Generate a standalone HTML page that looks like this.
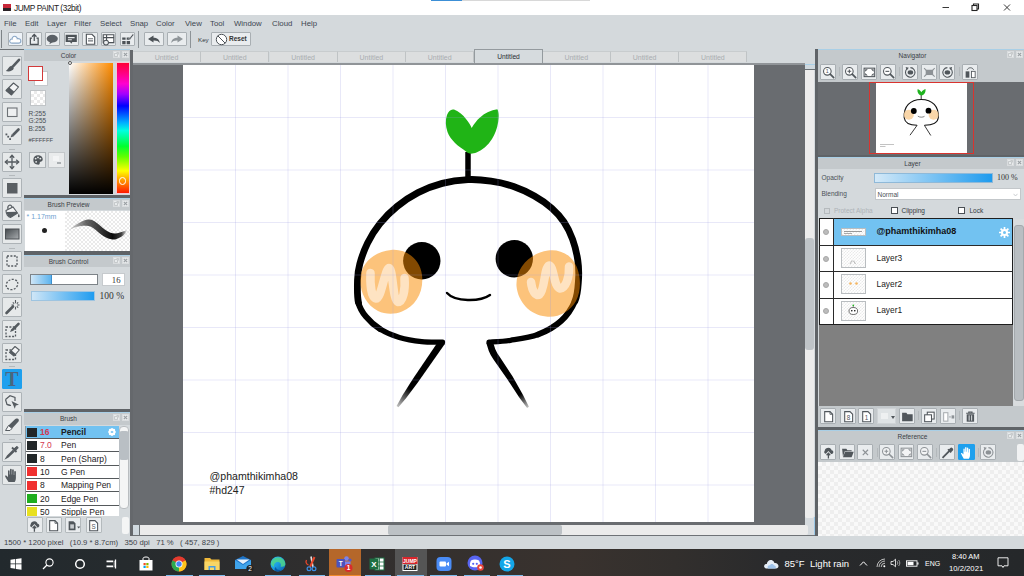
<!DOCTYPE html>
<html><head><meta charset="utf-8"><title>JUMP PAINT</title>
<style>
*{box-sizing:border-box;margin:0;padding:0}
html,body{width:1024px;height:576px;overflow:hidden}
body{position:relative;background:#d4d9dc;font-family:"Liberation Sans","DejaVu Sans",sans-serif;font-size:9px;color:#3a3f44}
.a{position:absolute}
.t{position:absolute;white-space:nowrap;line-height:1}
#title{left:0;top:0;width:1024px;height:15px;background:#fff}
#menubar{left:0;top:15px;width:1024px;height:14px;background:#d4d9dc}
#menubar .t{top:4.5px;font-size:7.8px;color:#3c4650}
#toolbar{left:0;top:29px;width:1024px;height:21px;background:#d4d9dc}
.tb{position:absolute;top:2.6px;height:14.8px;width:15.4px;background:#e9ecee;border:1px solid #a9afb3;border-radius:1px}
.tool{position:absolute;left:2px;width:20px;height:20px;background:#e6e9ea;border:1px solid #adb3b7;border-radius:1px}
.ptitle{position:absolute;background:#c4c9cc;border-top:1px solid #a9cfe6;text-align:center;font-size:6.5px;color:#3a4046;line-height:12px;padding-right:17px}
.pbtn{position:absolute;width:7px;height:7px;background:#e8ebec;border:1px solid #d9dcde}
#dark{left:133px;top:63px;width:672px;height:462px;background:#696c70}
#canvas{left:183px;top:65px;width:571px;height:457px;background:#fff;overflow:hidden}
.tab{position:absolute;top:51px;height:11px;width:68px;background:#dcdedf;border-right:1px solid #bfc3c5;border-top:1px solid #c8ccce;font-size:7px;color:#a9adb0;text-align:center;line-height:11px}
#status{left:0;top:536px;width:1024px;height:13px;background:#d4d9dc}
#taskbar{left:0;top:549px;width:1024px;height:27px;background:linear-gradient(90deg,#22292d 0%,#262b2e 12%,#2d2d2e 25%,#34302e 42%,#39322e 56%,#322f2d 66%,#292a2c 76%,#25282a 100%)}
.chk{background-color:#fff;background-image:linear-gradient(45deg,#eaeaea 25%,transparent 25%,transparent 75%,#eaeaea 75%),linear-gradient(45deg,#eaeaea 25%,transparent 25%,transparent 75%,#eaeaea 75%);background-size:8px 8px;background-position:0 0,4px 4px}
</style></head><body>

<!-- TITLE BAR -->
<div id="title" class="a">
  <div class="a" style="left:3px;top:4px;width:8px;height:4px;background:#c8283a"></div>
  <div class="a" style="left:3px;top:8px;width:8px;height:3px;background:#2a2226"></div>
  <div class="t" style="left:14px;top:4px;font-size:8.300px;letter-spacing:-.4px;color:#222">JUMP PAINT (32bit)</div>
  <svg class="a" style="left:940px;top:1px" width="12" height="12" viewBox="0 0 12 12"><path d="M2.500,6.500 H9" stroke="#222" stroke-width=".9"/></svg>
<svg class="a" style="left:969px;top:1px" width="12" height="12" viewBox="0 0 12 12"><rect x="3" y="4.500" width="5" height="5" fill="none" stroke="#222" stroke-width="1.100"/><path d="M4.500,4.500 V3 H9.500 V8 H8" fill="none" stroke="#222" stroke-width="1.100"/></svg>
<svg class="a" style="left:1001px;top:1px" width="12" height="12" viewBox="0 0 12 12"><path d="M3,3.500 L9,9.500 M9,3.500 L3,9.500" stroke="#222" stroke-width=".9"/></svg>
<div class="a" style="left:431px;top:0;width:31px;height:1px;background:#3c8fd6"></div>
  <div class="a" style="left:462px;top:0;width:128px;height:1px;background:#d8d8d8"></div>
</div>

<!-- MENU BAR -->
<div id="menubar" class="a">
  <span class="t" style="left:4px">File</span><span class="t" style="left:25px">Edit</span><span class="t" style="left:47px">Layer</span><span class="t" style="left:74px">Filter</span><span class="t" style="left:100px">Select</span><span class="t" style="left:130px">Snap</span><span class="t" style="left:156px">Color</span><span class="t" style="left:185px">View</span><span class="t" style="left:210px">Tool</span><span class="t" style="left:234px">Window</span><span class="t" style="left:272px">Cloud</span><span class="t" style="left:301px">Help</span>
</div>

<!-- TOOLBAR -->
<div id="toolbar" class="a">
<div class="a" style="left:1px;top:1px;width:1px;height:18px;background:#7d8387"></div>
<div class="tb" style="left:7.6px;background:#eef3f8"><svg class="a" style="left:-.5px;top:-.6px" width="14.500" height="14.500" viewBox="0 0 13 13"><path d="M3.500,10 C1.500,10 1,8 2,7 C2.500,6.300 3.300,6.300 3.600,6.400 C3.600,4 6,3 7.500,4.500 C8,4.900 8.300,5.500 8.300,6 C10,5.600 11.500,6.500 11.500,8 C11.500,9.300 10.500,10 9.500,10 Z" fill="#fff" stroke="#8aa7c6" stroke-width="1"/></svg></div>
<div class="tb" style="left:26.3px"><svg class="a" style="left:-.5px;top:-.6px" width="14.500" height="14.500" viewBox="0 0 13 13"><path d="M4.500,5.500 H3 V11 H10 V5.500 H8.500 M6.500,8 V2.500 M4.500,4.300 L6.500,2.200 L8.500,4.300" fill="none" stroke="#4c5257" stroke-width="1.100"/></svg></div>
<div class="tb" style="left:44.9px"><svg class="a" style="left:-.5px;top:-.6px" width="14.500" height="14.500" viewBox="0 0 13 13"><ellipse cx="6.500" cy="6" rx="5" ry="3.500" fill="#5a6066"/><path d="M4.500,8.500 L4,11 L7,9 Z" fill="#5a6066"/></svg></div>
<div class="tb" style="left:63.6px"><svg class="a" style="left:-.5px;top:-.6px" width="14.500" height="14.500" viewBox="0 0 13 13"><path d="M1.500,2.500 H11.500 V9 H7.500 L6.500,10.500 L5.500,9 H1.500 Z" fill="#4c5257"/><path d="M3.500,5 H9.500 M3.500,7 H7" stroke="#e9ecee" stroke-width="1"/></svg></div>
<div class="tb" style="left:82.2px"><svg class="a" style="left:-.5px;top:-.6px" width="14.500" height="14.500" viewBox="0 0 13 13"><path d="M3,2 H8 L10.500,4.500 V11 H3 Z" fill="#fff" stroke="#4c5257" stroke-width="1"/><path d="M4.500,6 H9 M4.500,8 H9" stroke="#6c7277" stroke-width="1"/></svg></div>
<div class="tb" style="left:100.9px"><svg class="a" style="left:-.5px;top:-.6px" width="14.500" height="14.500" viewBox="0 0 13 13"><path d="M2,2.500 H11.500 V9.500 H2 Z M2,5 H11.500 M5,2.500 V9.500" fill="#fff" stroke="#4c5257" stroke-width="1"/><circle cx="4.500" cy="9.500" r="2.200" fill="#e9ecee" stroke="#4c5257" stroke-width=".9"/></svg></div>
<div class="tb" style="left:119.5px"><svg class="a" style="left:-.5px;top:-.6px" width="14.500" height="14.500" viewBox="0 0 13 13"><path d="M2,5 H5 V7 H2 Z M6,5 H9 V7 H6 Z M2,8 H5 V11 H2 Z M6,8 H9 V11 H6 Z" fill="#4c5257"/><path d="M8,6 L11.500,1.500 L12.500,2.500 L9,7 Z" fill="#4c5257" stroke="#e9ecee" stroke-width=".5"/></svg></div>
<div class="a" style="left:138px;top:2px;width:1px;height:17px;background:#8d9397"></div>
<div class="tb" style="left:144px;width:20px"><svg class="a" style="left:0;top:0" width="18" height="13" viewBox="0 0 18 13"><path d="M3,6 L8.500,2.500 V4.800 C12,4.800 14.500,6.500 14.800,10 C13.500,8 11.500,7.300 8.500,7.400 V9.500 Z" fill="#4c5257"/></svg></div>
<div class="tb" style="left:167px;width:20px"><svg class="a" style="left:0;top:0" width="18" height="13" viewBox="0 0 18 13"><path d="M15,6 L9.500,2.500 V4.800 C6,4.800 3.500,6.500 3.200,10 C4.500,8 6.500,7.300 9.500,7.400 V9.500 Z" fill="#8f9599"/></svg></div>
<div class="a" style="left:190px;top:2px;width:1px;height:17px;background:#8d9397"></div>
<span class="t" style="left:198px;top:7.500px;font-size:6.200px;color:#33383d">Key</span>
<div class="tb" style="left:211px;width:40px"><svg class="a" style="left:3px;top:0" width="13" height="13" viewBox="0 0 13 13"><circle cx="6.500" cy="6.500" r="5.200" fill="#fff" stroke="#4c5257" stroke-width="1"/><path d="M2.800,2.800 L10.200,10.200" stroke="#4c5257" stroke-width="1"/></svg><span class="t" style="left:17px;top:3.500px;font-size:6.500px;font-weight:bold;color:#333">Reset</span></div>
</div>

<!-- TOOL COLUMN -->
<div class="a" style="left:0;top:49px;width:24px;height:1px;background:#6d7276"></div>
<div class="tool" style="top:56px;"><svg class="a" style="left:0;top:0" width="18" height="18" viewBox="0 0 18 18"><path d="M16,2.800 L9.500,9.800" stroke="#555b60" stroke-width="2.600" stroke-linecap="round"/><path d="M8.200,8.800 L10.800,11.200 C10,14 6,15 2.800,14 C5,12.800 5.500,9.800 8.200,8.800 Z" fill="#555b60"/></svg></div>
<div class="tool" style="top:79px;"><svg class="a" style="left:0;top:0" width="18" height="18" viewBox="0 0 18 18"><path d="M10.500,3 L15.500,7 L8.500,15 L3,10.500 Z" fill="#f4f5f6" stroke="#555b60" stroke-width="1.100" stroke-linejoin="round"/><path d="M6,7.200 L11.300,11.700 L8.500,15 L3,10.500 Z" fill="#555b60"/></svg></div>
<div class="tool" style="top:102px;"><svg class="a" style="left:0;top:0" width="18" height="18" viewBox="0 0 18 18"><rect x="4.500" y="5" width="9.500" height="8.500" fill="#eef0f1" stroke="#6d7276" stroke-width="1.100"/></svg></div>
<div class="tool" style="top:125px;"><svg class="a" style="left:0;top:0" width="18" height="18" viewBox="0 0 18 18"><path d="M15.500,3.500 L10.500,8.500" stroke="#555b60" stroke-width="2.600" stroke-linecap="round"/><path d="M8.800,8 L11,10.200 L7.500,11.500 Z" fill="#555b60"/><rect x="2.500" y="7.500" width="1.800" height="1.800" fill="#555b60"/><rect x="4.300" y="9.800" width="1.800" height="1.800" fill="#555b60"/><rect x="6.200" y="12.200" width="1.800" height="1.800" fill="#555b60"/></svg></div>
<div class="tool" style="top:152px;"><svg class="a" style="left:0;top:0" width="18" height="18" viewBox="0 0 18 18"><path d="M9,2.500 V15.500 M2.500,9 H15.500" stroke="#555b60" stroke-width="1.300"/><path d="M6.800,4.800 L9,2.300 L11.200,4.800 M6.800,13.200 L9,15.700 L11.200,13.200 M4.800,6.800 L2.300,9 L4.800,11.200 M13.200,6.800 L15.700,9 L13.200,11.200" fill="none" stroke="#555b60" stroke-width="1.300"/></svg></div>
<div class="tool" style="top:178px;"><svg class="a" style="left:0;top:0" width="18" height="18" viewBox="0 0 18 18"><rect x="4" y="4" width="10.500" height="10.500" fill="#5a5f63"/></svg></div>
<div class="tool" style="top:201px;"><svg class="a" style="left:0;top:0" width="18" height="18" viewBox="0 0 18 18"><path d="M3,8.500 L10,5 L14.500,11 L7.500,15.500 C5,15.500 3,12 3,8.500 Z" fill="#f4f5f6" stroke="#555b60" stroke-width="1.100"/><path d="M3.300,10 L13.500,9.800 L14.500,11 L7.500,15.500 C5.500,15 4,13 3.300,10 Z" fill="#555b60"/><path d="M5,7 C4,3 8,1.500 9,5.200" fill="none" stroke="#555b60" stroke-width="1.200"/><path d="M15.800,11.500 C16.800,13.500 17,15.300 15.800,15.300 C14.600,15.300 14.800,13.500 15.800,11.500 Z" fill="#555b60"/></svg></div>
<div class="tool" style="top:224px;"><svg class="a" style="left:0;top:0" width="18" height="18" viewBox="0 0 18 18"><defs><linearGradient id="gr1" x1="0" x2="1" y1="0" y2="1"><stop offset="0" stop-color="#44494d"/><stop offset="1" stop-color="#a9adb0"/></linearGradient></defs><rect x="2.500" y="4" width="13.500" height="10" fill="url(#gr1)" stroke="#4a4f53" stroke-width="1"/></svg></div>
<div class="tool" style="top:251px;"><svg class="a" style="left:0;top:0" width="18" height="18" viewBox="0 0 18 18"><rect x="4" y="4" width="10" height="10" fill="none" stroke="#555b60" stroke-width="1.300" stroke-dasharray="2 1.400"/></svg></div>
<div class="tool" style="top:274px;"><svg class="a" style="left:0;top:0" width="18" height="18" viewBox="0 0 18 18"><ellipse cx="9" cy="9.500" rx="6" ry="5" fill="none" stroke="#555b60" stroke-width="1.300" stroke-dasharray="2 1.400" transform="rotate(-25 9 9.500)"/></svg></div>
<div class="tool" style="top:297px;"><svg class="a" style="left:0;top:0" width="18" height="18" viewBox="0 0 18 18"><path d="M3.500,15 L10,8.500" stroke="#555b60" stroke-width="2.600" stroke-linecap="round"/><path d="M12.500,2 V5.200 M12.500,8.800 V11.500 M8.500,7 H10.800 M14.200,7 H16.500 M9.800,4.300 L11.200,5.700 M15.200,4.300 L13.800,5.700 M15.200,9.700 L13.800,8.300" stroke="#555b60" stroke-width="1.100"/></svg></div>
<div class="tool" style="top:320px;"><svg class="a" style="left:0;top:0" width="18" height="18" viewBox="0 0 18 18"><rect x="3" y="6" width="9.500" height="9.500" fill="none" stroke="#555b60" stroke-width="1.300" stroke-dasharray="2 1.400"/><path d="M15.500,2.800 L10,8.300" stroke="#555b60" stroke-width="2.600" stroke-linecap="round"/><path d="M8.500,7.800 L10.500,9.800 L7,11 Z" fill="#555b60"/></svg></div>
<div class="tool" style="top:343px;"><svg class="a" style="left:0;top:0" width="18" height="18" viewBox="0 0 18 18"><rect x="3" y="6" width="9.500" height="9.500" fill="none" stroke="#555b60" stroke-width="1.300" stroke-dasharray="2 1.400"/><path d="M12,2.500 L16.300,6 L11,12 L6.500,8.300 Z" fill="#f4f5f6" stroke="#555b60" stroke-width="1.100" stroke-linejoin="round"/><path d="M8.300,6.200 L12.800,10 L11,12 L6.500,8.300 Z" fill="#555b60"/></svg></div>
<div class="tool" style="top:369px;background:#1ea0ee;border-color:#1ea0ee;"><svg class="a" style="left:0;top:0" width="18" height="18" viewBox="0 0 18 18"><text x="9" y="16" text-anchor="middle" font-family="Liberation Serif, serif" font-size="20" font-weight="bold" fill="#4a6580">T</text></svg></div>
<div class="tool" style="top:392px;"><svg class="a" style="left:0;top:0" width="18" height="18" viewBox="0 0 18 18"><path d="M2.500,6.500 L7,2.800 L12,4.500 L12,8 M7.500,12.500 L4,11.500 Z" fill="none" stroke="#555b60" stroke-width="1.200"/><path d="M2.500,6.500 L4,11.500 L8,12.500" fill="none" stroke="#555b60" stroke-width="1.200"/><path d="M8.500,8 L16,11.800 L12.800,12.500 L11.800,15.800 Z" fill="#555b60"/></svg></div>
<div class="tool" style="top:415px;"><svg class="a" style="left:0;top:0" width="18" height="18" viewBox="0 0 18 18"><path d="M13.500,2.500 C15.500,2 16.500,4 15.500,5.500 L9,12.500 L5.500,9.500 L12,3.200 C12.500,2.800 13,2.600 13.500,2.500 Z" fill="#555b60"/><path d="M5.500,9.500 L9,12.500 L7,14.500 L2.500,14.500 Z" fill="#f4f5f6" stroke="#555b60" stroke-width="1"/></svg></div>
<div class="tool" style="top:442px;"><svg class="a" style="left:0;top:0" width="18" height="18" viewBox="0 0 18 18"><path d="M10.500,7 L4.500,13 L3.200,15 L5.200,14 L11.500,8" fill="#f4f5f6" stroke="#555b60" stroke-width="1.300"/><path d="M9,4.500 L13.500,9" stroke="#555b60" stroke-width="1.800"/><path d="M10.800,6.300 L12.800,4 C14,2.500 16,4.500 14.500,5.800 L12.300,7.800 Z" fill="#555b60" stroke="#555b60" stroke-width="1"/></svg></div>
<div class="tool" style="top:465px;"><svg class="a" style="left:0;top:0" width="18" height="18" viewBox="0 0 18 18"><path d="M5.500,16 C4,13.500 2.500,11.500 2,10 C2.500,9.200 3.600,9.400 4.600,10.800 L5,11.300 V5 C5,3.900 6.600,3.900 6.600,5 V8.500 H7 V3.500 C7,2.400 8.700,2.400 8.700,3.500 V8.500 H9.100 V4 C9.100,2.900 10.800,2.900 10.800,4 V9 H11.200 V5.800 C11.200,4.700 12.900,4.700 12.900,5.800 V12 C12.900,14 12.200,15 11.700,16 Z" fill="#555b60"/></svg></div>
<div class="a" style="left:9px;top:149px;width:6px;height:1px;background:#b4b9bc"></div>
<div class="a" style="left:9px;top:175px;width:6px;height:1px;background:#b4b9bc"></div>
<div class="a" style="left:9px;top:248px;width:6px;height:1px;background:#b4b9bc"></div>
<div class="a" style="left:9px;top:366px;width:6px;height:1px;background:#b4b9bc"></div>
<div class="a" style="left:9px;top:439px;width:6px;height:1px;background:#b4b9bc"></div>
<!-- LEFT PANELS -->
<div class="a" style="left:130px;top:50px;width:3px;height:486px;background:#65686c"></div>
<div class="a" style="left:24px;top:50px;width:106px;height:486px;background:#d4d9dc"></div>
<div class="ptitle" style="left:24px;top:49px;width:106px;height:12px;font-size:6.500px">Color<div class="pbtn" style="left:89px;top:1px"><svg class="a" style="left:0;top:0" width="5" height="5" viewBox="0 0 5 5"><path d="M.5,1.500 H3.500 V4.500 H.5 Z M2.500,.5 H4.500 V2.500" fill="none" stroke="#b7bcbf" stroke-width=".7"/></svg></div><div class="pbtn" style="left:98px;top:1px"><svg class="a" style="left:0;top:0" width="5" height="5" viewBox="0 0 5 5"><path d="M.8,.8 L4.200,4.200 M4.200,.8 L.8,4.200" stroke="#9a9fa3" stroke-width="1.100"/></svg></div></div>
<div class="a" style="left:33.500px;top:71px;width:14px;height:15px;background:#fff;border:1px solid #c5c9cc"></div>
<div class="a" style="left:28px;top:66px;width:15px;height:15px;background:#fff;border:1.500px solid #d23a3a"></div>
<div class="a chk" style="left:30px;top:90px;width:16px;height:16px;border:1px solid #c0c4c7;background-size:6px 6px;background-position:0 0,3px 3px"></div>
<span class="t" style="left:28.500px;top:110.5px;font-size:6.500px;color:#4a4f54">R:255</span><span class="t" style="left:28.500px;top:118px;font-size:6.500px;color:#4a4f54">G:255</span><span class="t" style="left:28.500px;top:125.5px;font-size:6.500px;color:#4a4f54">B:255</span><span class="t" style="left:28.500px;top:137.5px;font-size:5.800px;color:#4a4f54">#FFFFFF</span>
<div class="a" style="left:29px;top:152px;width:17px;height:15.500px;background:#e6e9ea;border:1px solid #adb3b7"><svg class="a" style="left:.5px;top:0" width="14" height="14" viewBox="0 0 15 15"><path d="M7.500,2.500 C11,2.500 13,5 12.500,7.500 C12,9.500 10,9 9.500,10 C9,11 10,12.500 8,12.500 C4.500,12.500 2.500,10.500 2.500,7.500 C2.500,4.500 4.500,2.500 7.500,2.500 Z" fill="#50565b"/><circle cx="5" cy="6" r="1" fill="#e6e9ea"/><circle cx="7.500" cy="4.700" r="1" fill="#e6e9ea"/><circle cx="10" cy="6" r="1" fill="#e6e9ea"/><circle cx="5.500" cy="9.500" r="1" fill="#e6e9ea"/></svg></div>
<div class="a" style="left:48px;top:152px;width:17px;height:15.500px;background:#e9ebec;border:1px solid #c3c7ca"><div class="a" style="left:8px;top:9px;width:4px;height:1.500px;background:#a9aeb1"></div><div class="a" style="left:4px;top:3px;width:6px;height:5px;background:#f3f4f5"></div></div>
<div class="a" style="left:69px;top:62.500px;width:44px;height:131px;background:linear-gradient(to bottom,rgba(0,0,0,0) 0%,rgba(0,0,0,.5) 50%,#000 100%),linear-gradient(to right,#fff 0%,#ff8c00 100%)"></div>
<div class="a" style="left:67.500px;top:61px;width:4px;height:4px;border-radius:50%;border:.8px solid #555;background:#fff"></div>
<div class="a" style="left:115.500px;top:62px;width:14px;height:132px;background:#f4c9d4"></div>
<div class="a" style="left:116.500px;top:63px;width:12px;height:130px;background:linear-gradient(to bottom,#ff0036 0%,#ff00d0 16%,#a000ff 24%,#0000ff 33%,#00b0ff 46%,#00ffe0 52%,#00ff30 64%,#60ff00 72%,#ffff00 83%,#ff9000 91%,#ff1800 100%)"></div>
<div class="a" style="left:118.500px;top:177px;width:7.500px;height:7.500px;border-radius:50%;border:1.500px solid #fff"></div>
<div class="a" style="left:24px;top:194.500px;width:106px;height:3px;background:#5f6367"></div>
<div class="ptitle" style="left:24px;top:197.5px;width:106px;height:12.500px;font-size:6.500px">Brush Preview<div class="pbtn" style="left:89px;top:1px"><svg class="a" style="left:0;top:0" width="5" height="5" viewBox="0 0 5 5"><path d="M.5,1.500 H3.500 V4.500 H.5 Z M2.500,.5 H4.500 V2.500" fill="none" stroke="#b7bcbf" stroke-width=".7"/></svg></div><div class="pbtn" style="left:98px;top:1px"><svg class="a" style="left:0;top:0" width="5" height="5" viewBox="0 0 5 5"><path d="M.8,.8 L4.200,4.200 M4.200,.8 L.8,4.200" stroke="#9a9fa3" stroke-width="1.100"/></svg></div></div>
<div class="a" style="left:24.500px;top:210.500px;width:40px;height:40.500px;background:#fff"><span class="t" style="left:2px;top:2.500px;font-size:7px;color:#6f9fd0">* 1.17mm</span><div class="a" style="left:17.500px;top:17.500px;width:5px;height:5px;border-radius:50%;background:#222"></div></div>
<div class="a chk" style="left:65px;top:210.500px;width:65px;height:40.500px;background-size:4px 4px;background-position:0 0,2px 2px"><svg class="a" style="left:0;top:0" width="65" height="41" viewBox="0 0 65 41"><defs><linearGradient id="bs" x1="0" x2="1" y1="0" y2="0"><stop offset="0" stop-color="#333" stop-opacity=".15"/><stop offset=".3" stop-color="#333" stop-opacity=".75"/><stop offset=".75" stop-color="#0a0a0a" stop-opacity="1"/><stop offset=".9" stop-color="#111" stop-opacity=".8"/><stop offset="1" stop-color="#222" stop-opacity=".1"/></linearGradient></defs><path d="M4,19 C8,16 10,14 13,12.500 C17,10 21,8.200 24.500,8.500 C29,9 32,12 35,14.500 C39,18 42,20.500 45.500,21.800 C49,23 52,22.500 55,21.500 C58,20.500 60,19.800 62,19.500 C61,22 58,25 55,26.500 C52,28 50,28.800 47.500,28.500 C44,28 42,27 40,26 C37,24.500 35,22.500 33,21 C30,18.500 27,15.500 23.500,15 C19,14.500 16,15 13,15.500 C9,16.500 6,18 4,19 Z" fill="url(#bs)"/></svg></div>
<div class="a" style="left:24px;top:251px;width:106px;height:3.500px;background:#5f6367"></div>
<div class="ptitle" style="left:24px;top:254.5px;width:106px;height:12px;font-size:6.500px">Brush Control<div class="pbtn" style="left:89px;top:1px"><svg class="a" style="left:0;top:0" width="5" height="5" viewBox="0 0 5 5"><path d="M.5,1.500 H3.500 V4.500 H.5 Z M2.500,.5 H4.500 V2.500" fill="none" stroke="#b7bcbf" stroke-width=".7"/></svg></div><div class="pbtn" style="left:98px;top:1px"><svg class="a" style="left:0;top:0" width="5" height="5" viewBox="0 0 5 5"><path d="M.8,.8 L4.200,4.200 M4.200,.8 L.8,4.200" stroke="#9a9fa3" stroke-width="1.100"/></svg></div></div>
<div class="a" style="left:30px;top:274px;width:68px;height:11px;background:#fff;border:1px solid #7d8388"><div class="a" style="left:0;top:0;width:21px;height:9px;background:linear-gradient(to right,#cfe6f7,#5db4ee);border-right:1px solid #3b8fd0"></div></div>
<div class="a" style="left:101.500px;top:272.500px;width:23px;height:13.500px;background:#fff;border:1px solid #c6cacd"><span class="t" style="right:3px;top:2.500px;font-size:8.700px;color:#333;font-family:Liberation Serif,serif">16</span></div>
<div class="a" style="left:30.500px;top:290.500px;width:64.500px;height:10.800px;background:linear-gradient(to right,#cfe6f7,#1f9cf0);border:1px solid #9ec4e0"></div>
<span class="t" style="left:99.500px;top:291.500px;font-size:9.500px;color:#333;font-family:Liberation Serif,serif">100 %</span>
<div class="a" style="left:24px;top:408.500px;width:106px;height:3.500px;background:#5f6367"></div>
<div class="ptitle" style="left:24px;top:412px;width:106px;height:12.5px;font-size:6.5px">Brush<div class="pbtn" style="left:89px;top:1px"><svg class="a" style="left:0;top:0" width="5" height="5" viewBox="0 0 5 5"><path d="M.5,1.500 H3.500 V4.500 H.5 Z M2.500,.5 H4.500 V2.500" fill="none" stroke="#b7bcbf" stroke-width=".7"/></svg></div><div class="pbtn" style="left:98px;top:1px"><svg class="a" style="left:0;top:0" width="5" height="5" viewBox="0 0 5 5"><path d="M.8,.8 L4.200,4.200 M4.200,.8 L.8,4.200" stroke="#9a9fa3" stroke-width="1.100"/></svg></div></div>
<div class="a" style="left:25px;top:425.500px;width:93.500px;height:90px;background:#fff;overflow:hidden;border-left:1px solid #8f9498">
<div class="a" style="left:0;top:0.0px;width:93px;height:13.400px;background:#72c2f1;border-bottom:1px solid #55595c"><div class="a" style="left:1px;top:2px;width:9.500px;height:9px;background:#222729"></div><span class="t" style="left:14px;top:2.500px;font-size:8.500px;color:#d4374f;font-weight:bold;">16</span><span class="t" style="left:35px;top:2.500px;font-size:8.500px;color:#1d2023;font-weight:bold;">Pencil</span><svg class="a" style="left:82px;top:2.500px" width="8" height="8" viewBox="0 0 8 8"><circle cx="4" cy="4" r="2.600" fill="none" stroke="#fff" stroke-width="1.600"/><path d="M4,0 V8 M0,4 H8 M1.200,1.200 L6.800,6.800 M6.800,1.200 L1.200,6.800" stroke="#fff" stroke-width="1.200"/><circle cx="4" cy="4" r="1.100" fill="#72c2f1"/></svg></div>
<div class="a" style="left:0;top:13.33px;width:93px;height:13.400px;border-bottom:1px solid #55595c"><div class="a" style="left:1px;top:2px;width:9.500px;height:9px;background:#222729"></div><span class="t" style="left:14px;top:2.500px;font-size:8.500px;color:#d4374f;">7.0</span><span class="t" style="left:35px;top:2.500px;font-size:8.500px;color:#1d2023;">Pen</span></div>
<div class="a" style="left:0;top:26.66px;width:93px;height:13.400px;border-bottom:1px solid #55595c"><div class="a" style="left:1px;top:2px;width:9.500px;height:9px;background:#222729"></div><span class="t" style="left:14px;top:2.500px;font-size:8.500px;color:#222;">8</span><span class="t" style="left:35px;top:2.500px;font-size:8.500px;color:#1d2023;">Pen (Sharp)</span></div>
<div class="a" style="left:0;top:39.99px;width:93px;height:13.400px;border-bottom:1px solid #55595c"><div class="a" style="left:1px;top:2px;width:9.500px;height:9px;background:#f03030"></div><span class="t" style="left:14px;top:2.500px;font-size:8.500px;color:#222;">10</span><span class="t" style="left:35px;top:2.500px;font-size:8.500px;color:#1d2023;">G Pen</span></div>
<div class="a" style="left:0;top:53.32px;width:93px;height:13.400px;border-bottom:1px solid #55595c"><div class="a" style="left:1px;top:2px;width:9.500px;height:9px;background:#f03030"></div><span class="t" style="left:14px;top:2.500px;font-size:8.500px;color:#222;">8</span><span class="t" style="left:35px;top:2.500px;font-size:8.500px;color:#1d2023;">Mapping Pen</span></div>
<div class="a" style="left:0;top:66.65px;width:93px;height:13.400px;border-bottom:1px solid #55595c"><div class="a" style="left:1px;top:2px;width:9.500px;height:9px;background:#1fae1f"></div><span class="t" style="left:14px;top:2.500px;font-size:8.500px;color:#222;">20</span><span class="t" style="left:35px;top:2.500px;font-size:8.500px;color:#1d2023;">Edge Pen</span></div>
<div class="a" style="left:0;top:79.98px;width:93px;height:13.400px;border-bottom:1px solid #55595c"><div class="a" style="left:1px;top:2px;width:9.500px;height:9px;background:#e8e020"></div><span class="t" style="left:14px;top:2.500px;font-size:8.500px;color:#222;">50</span><span class="t" style="left:35px;top:2.500px;font-size:8.500px;color:#1d2023;">Stipple Pen</span></div>
</div>
<div class="a" style="left:119px;top:426px;width:9.500px;height:83px;background:#f4f5f5;border:1px solid #b9bdc0;border-radius:4px"></div>
<div class="a" style="left:119px;top:431px;width:9.500px;height:28.500px;background:#b9bfc4;border-radius:3px"></div>
<div class="a" style="left:122px;top:517px;width:6.500px;height:17px;background:#f4f5f5;border-radius:2px"></div>
<div class="a" style="left:26.5px;top:517px;width:16px;height:16px;background:#e9ecee;border:1px solid #b4babd;border-radius:1px"><svg class="a" style="left:-.2px;top:-.2px" width="14.800" height="14.800" viewBox="0 0 14 14"><path d="M7,3 C9,3 10,4.500 10,5.500 C11.500,5.500 12,7 11.500,8 C11,9 10,9 9,9 H5 C3,9 2.500,7 3.500,6 C3.500,4 5.500,3 7,3 Z" fill="#50565b"/><path d="M7,12.500 V7.500 M5,9.500 L7,7.300 L9,9.500" stroke="#e6e9ea" stroke-width="2.200" fill="none"/><path d="M7,13 V8 M5.300,9.700 L7,7.800 L8.700,9.700" stroke="#50565b" stroke-width="1.200" fill="none"/></svg></div>
<div class="a" style="left:45.5px;top:517px;width:16px;height:16px;background:#e9ecee;border:1px solid #b4babd;border-radius:1px"><svg class="a" style="left:-.2px;top:-.2px" width="14.800" height="14.800" viewBox="0 0 14 14"><path d="M3.500,2.500 H8.500 L11,5 V12 H3.500 Z" fill="#fff" stroke="#50565b" stroke-width="1"/><path d="M8.500,2.500 V5 H11" fill="none" stroke="#50565b" stroke-width=".8"/></svg></div>
<div class="a" style="left:65px;top:517px;width:16px;height:16px;background:#e9ecee;border:1px solid #b4babd;border-radius:1px"><svg class="a" style="left:-.2px;top:-.2px" width="14.800" height="14.800" viewBox="0 0 14 14"><path d="M2.500,3 H7 L9,5 V11.500 H2.500 Z" fill="#50565b"/><path d="M4,6 H7.500 V10 H4 Z" fill="#c9cdd0"/><path d="M10.500,8 H13.500 L12,10 Z" fill="#50565b"/></svg></div>
<div class="a" style="left:85.5px;top:517px;width:16px;height:16px;background:#e9ecee;border:1px solid #b4babd;border-radius:1px"><svg class="a" style="left:-.2px;top:-.2px" width="14.800" height="14.800" viewBox="0 0 14 14"><path d="M3.500,2.500 H8.500 L11,5 V12 H3.500 Z" fill="#fff" stroke="#50565b" stroke-width="1"/><text x="7.200" y="10.500" text-anchor="middle" font-size="6" font-family="Liberation Sans, sans-serif" fill="#50565b">S</text></svg></div>
<!-- TABS -->
<div class="tab" style="left:133.0px">Untitled</div>
<div class="tab" style="left:201.3px">Untitled</div>
<div class="tab" style="left:269.6px">Untitled</div>
<div class="tab" style="left:337.9px">Untitled</div>
<div class="tab" style="left:406.2px">Untitled</div>
<div class="a" style="left:474px;top:49px;width:69px;height:14px;background:#d6dbde;border:1px solid #949a9e;border-bottom:none;font-size:6.700px;color:#2a2e32;text-align:center;line-height:14px;z-index:2">Untitled</div>
<div class="tab" style="left:542.8px">Untitled</div>
<div class="tab" style="left:611.1px">Untitled</div>
<div class="tab" style="left:679.4px">Untitled</div>
<div class="a" style="left:133px;top:62.500px;width:672px;height:2px;background:#909498;z-index:3"></div>
<!-- MAIN -->
<div id="dark" class="a"></div>
<div id="canvas" class="a"><svg class="a" style="left:0;top:0" width="571" height="457" viewBox="183 65 571 457">
<g id="art">
<defs>
<linearGradient id="lg1" gradientUnits="userSpaceOnUse" x1="442" y1="342" x2="397.500" y2="406.600"><stop offset="0" stop-color="#000"/><stop offset=".72" stop-color="#000"/><stop offset="1" stop-color="#000" stop-opacity=".25"/></linearGradient>
<linearGradient id="lg2" gradientUnits="userSpaceOnUse" x1="489" y1="342" x2="528" y2="407.300"><stop offset="0" stop-color="#000"/><stop offset=".8" stop-color="#000"/><stop offset="1" stop-color="#000" stop-opacity=".25"/></linearGradient>
</defs>
<path d="M468,178 L468,152" stroke="#000" stroke-width="5.500" fill="none"/>
<path d="M470,153.600 C468.500,153.300 467,152.500 466,151.500 C462,148.500 458,146 455,143 C451.500,139.500 449,136 447.500,132 C445.500,126 445.200,120 447,115 C448.500,111 451,108.800 454,109.600 C459,111.500 463,115 466,119 C468.500,122 470.500,125 471.700,128 C474,124 476.500,120.500 480,117.500 C485,113 491,110 497.300,109.300 C499,112 499,117 498.200,122 C497,129 495,134 492,139 C488,145.500 482.500,150 476.500,152.500 C474.500,153.300 472,153.800 470,153.600 Z" fill="#20b416"/>
<path d="M442.5,342.2 C439.0,342.1 428.9,342.5 421.7,341.7 C414.5,340.9 406.3,339.6 399.4,337.5 C392.4,335.4 385.6,332.5 380.0,329.0" stroke="#000" stroke-width="5.300" fill="none" stroke-linecap="round"/>
<path d="M380.0,329.0 C374.4,325.5 369.6,321.1 366.0,316.7 C362.4,312.3 359.9,308.9 358.5,302.8" stroke="#000" stroke-width="6.000" fill="none" stroke-linecap="round"/>
<path d="M358.5,302.8 C357.1,296.7 357.3,286.5 357.5,280.0 C357.7,273.5 358.1,269.9 359.8,263.8 C361.5,257.6 364.3,249.7 367.6,243.0 C370.9,236.3 374.8,229.9 379.7,223.8 C384.6,217.7 390.6,211.7 397.0,206.5 C403.4,201.3 410.5,196.4 418.0,192.6 C425.5,188.8 433.9,185.6 442.2,183.4 C450.5,181.2 459.9,180.0 468.0,179.6 C476.1,179.2 483.4,180.0 491.0,181.2 C498.6,182.3 506.4,184.0 513.6,186.5 C520.8,189.0 528.0,192.4 534.4,196.0 C540.8,199.6 546.9,203.9 551.8,208.2 C556.7,212.5 560.5,216.8 564.0,222.0 C567.5,227.2 570.3,233.0 572.6,239.4 C574.9,245.8 576.8,253.5 577.8,260.3 C578.8,267.1 579.0,273.2 578.5,280.0 C578.0,286.8 577.9,294.2 575.0,301.0" stroke="#000" stroke-width="6.800" fill="none" stroke-linecap="round"/>
<path d="M575.0,301.0 C572.1,307.8 567.2,315.4 561.0,321.0 C554.8,326.6 546.4,331.3 538.0,334.5" stroke="#000" stroke-width="6.000" fill="none" stroke-linecap="round"/>
<path d="M538.0,334.5 C529.6,337.7 518.7,339.0 510.5,340.3 C502.3,341.6 492.6,341.9 489.0,342.2" stroke="#000" stroke-width="5.300" fill="none" stroke-linecap="round"/>
<path d="M444.800,344 L417.800,382.500 L406,398.200 L398.400,407.200 L396.600,406 L402.400,395.600 L412.800,379.100 L439.200,340 Z" fill="url(#lg1)"/>
<path d="M492.700,341 L495.200,349 Q496.800,352.800 499.500,356.600 L512.500,376.300 L522.900,394.800 L528.900,406.800 L527.100,407.900 L519.100,397.200 L507.500,379.600 L493.500,359.500 Q490.200,354.700 488.800,351 L486.300,343 Z" fill="url(#lg2)"/>
<circle cx="421.800" cy="260.800" r="18.700" fill="#000"/>
<circle cx="514.300" cy="258.800" r="18.700" fill="#000"/>
<path d="M447,293 C455,302 480,302 490,295" stroke="#000" stroke-width="2.400" fill="none" stroke-linecap="round"/>
<path d="M391,250 C405,248.500 420,258 422,275 C424,292 416,306 402,311.500 C395,314.500 385,314.500 378,311 C366,305 359.500,292 360.500,278 C361.500,262 375,251.500 391,250 Z" fill="rgba(250,140,2,0.52)"/>
<path d="M548,250.500 C556,249 568,252 574,262 C581,272 582,290 576,301 C570,312 558,318 546,316.500 C530,315 518,302 516.500,286 C515.500,268 530,253 548,250.500 Z" fill="rgba(250,140,2,0.52)"/>
<path d="M370.500,273 C370,285 371.500,298 376,298.500 C381.500,298.500 384.500,270 389,268 C393,268 392.500,300 398,302 C403,302 405.500,290 404.500,278" stroke="rgba(255,240,222,0.72)" stroke-width="8.500" fill="none" stroke-linecap="round" stroke-linejoin="round"/>
<path d="M531,282 C532,291 536,297 539.500,294.500 C545,290 544,268 549,265.500 C554,265.500 553.500,287 560,288.500 C566,288 569.500,277 569,266.500" stroke="rgba(255,240,222,0.72)" stroke-width="8.500" fill="none" stroke-linecap="round" stroke-linejoin="round"/>
</g>
<g stroke="rgba(150,150,225,.32)" stroke-width=".7" fill="none"><line x1="235.5" y1="65" x2="235.5" y2="522"/><line x1="288.0" y1="65" x2="288.0" y2="522"/><line x1="340.5" y1="65" x2="340.5" y2="522"/><line x1="393.0" y1="65" x2="393.0" y2="522"/><line x1="445.5" y1="65" x2="445.5" y2="522"/><line x1="498.0" y1="65" x2="498.0" y2="522"/><line x1="550.5" y1="65" x2="550.5" y2="522"/><line x1="603.0" y1="65" x2="603.0" y2="522"/><line x1="655.5" y1="65" x2="655.5" y2="522"/><line x1="708.0" y1="65" x2="708.0" y2="522"/><line x1="183" y1="117.5" x2="754" y2="117.5"/><line x1="183" y1="170.0" x2="754" y2="170.0"/><line x1="183" y1="222.5" x2="754" y2="222.5"/><line x1="183" y1="275.0" x2="754" y2="275.0"/><line x1="183" y1="327.5" x2="754" y2="327.5"/><line x1="183" y1="380.0" x2="754" y2="380.0"/><line x1="183" y1="432.5" x2="754" y2="432.5"/><line x1="183" y1="485.0" x2="754" y2="485.0"/></g>
<text x="209.500" y="479.700" font-family="Liberation Sans, sans-serif" font-size="11.500" fill="#222" textLength="88.500" lengthAdjust="spacingAndGlyphs">@phamthikimha08</text>
<text x="209.500" y="493.700" font-family="Liberation Sans, sans-serif" font-size="11.500" fill="#222" textLength="35" lengthAdjust="spacingAndGlyphs">#hd247</text>
</svg></div>

<!-- SCROLLBARS -->
<div class="a" style="left:133px;top:524.500px;width:682px;height:10.500px;background:#d5dade"></div><div class="a" style="left:133px;top:525px;width:675px;height:10px;background:#ebebeb;border-radius:0 2px 2px 0"></div>
<div class="a" style="left:133px;top:524.500px;width:7px;height:10.500px;background:#cfd8de;border-right:1px solid #6a7074"></div>
<div class="a" style="left:387.500px;top:525px;width:174px;height:9.500px;background:#bcc1c5;border-radius:2px"></div>
<div class="a" style="left:133px;top:535px;width:682px;height:1px;background:#6e7276"></div>
<div class="a" style="left:804.500px;top:63.500px;width:10px;height:461px;background:#d5dade"></div><div class="a" style="left:804.500px;top:63.500px;width:9px;height:454.500px;background:#ececec;border-radius:0 0 2px 2px"></div><div class="a" style="left:813.500px;top:517px;width:1.500px;height:18px;background:#9cc8e6"></div>
<div class="a" style="left:804.500px;top:63.500px;width:10px;height:6.500px;background:#cfd8de;border-bottom:1px solid #6a7074;border-top:1px solid #a9cfe6"></div>
<div class="a" style="left:805px;top:238px;width:9px;height:112px;background:#bfc4c8;border-radius:3px"></div>

<div class="a" style="left:814.500px;top:49px;width:3.500px;height:487px;background:#5f6367"></div>
<!-- RIGHT PANEL -->
<div class="a" style="left:818px;top:49px;width:206px;height:487px;background:#d4d9dc"></div>
<div class="ptitle" style="left:818px;top:49px;width:206px;height:13px;font-size:6.5px">Navigator<div class="pbtn" style="left:189px;top:1px"><svg class="a" style="left:0;top:0" width="5" height="5" viewBox="0 0 5 5"><path d="M.5,1.500 H3.500 V4.500 H.5 Z M2.500,.5 H4.500 V2.500" fill="none" stroke="#b7bcbf" stroke-width=".7"/></svg></div><div class="pbtn" style="left:198px;top:1px"><svg class="a" style="left:0;top:0" width="5" height="5" viewBox="0 0 5 5"><path d="M.8,.8 L4.200,4.200 M4.200,.8 L.8,4.200" stroke="#9a9fa3" stroke-width="1.100"/></svg></div></div>
<div class="a" style="left:818px;top:62px;width:206px;height:19.500px;background:#c4c9cc"></div>
<div class="a" style="left:820px;top:64px;width:16px;height:16px;background:#e9ecee;border:1px solid #a9afb3;border-radius:1px;"><svg class="a" style="left:-.2px;top:-.2px" width="14.800" height="14.800" viewBox="0 0 14 14"><circle cx="6" cy="6" r="3.600" fill="#fff" stroke="#50565b" stroke-width="1"/><path d="M8.700,8.700 L12,12" stroke="#50565b" stroke-width="1.600" stroke-linecap="round"/><text x="6" y="8" text-anchor="middle" font-size="5" font-family="Liberation Sans, sans-serif" fill="#50565b">1</text></svg></div>
<div class="a" style="left:839px;top:67px;width:1px;height:9px;background:#b3b8bb"></div>
<div class="a" style="left:842px;top:64px;width:16px;height:16px;background:#e9ecee;border:1px solid #a9afb3;border-radius:1px;"><svg class="a" style="left:-.2px;top:-.2px" width="14.800" height="14.800" viewBox="0 0 14 14"><circle cx="6" cy="6" r="3.600" fill="#fff" stroke="#50565b" stroke-width="1"/><path d="M8.700,8.700 L12,12" stroke="#50565b" stroke-width="1.600" stroke-linecap="round"/><path d="M4.200,6 H7.800 M6,4.200 V7.800" stroke="#50565b" stroke-width="1"/></svg></div>
<div class="a" style="left:861px;top:64px;width:16px;height:16px;background:#e9ecee;border:1px solid #a9afb3;border-radius:1px;"><svg class="a" style="left:-.2px;top:-.2px" width="14.800" height="14.800" viewBox="0 0 14 14"><rect x="2" y="3" width="10" height="8" fill="#fff" stroke="#50565b" stroke-width="1"/><path d="M3,4 L5.500,4 L3,6.500 Z M11,4 L8.500,4 L11,6.500 Z M3,10 L5.500,10 L3,7.500 Z M11,10 L8.500,10 L11,7.500 Z" fill="#50565b"/></svg></div>
<div class="a" style="left:880px;top:64px;width:16px;height:16px;background:#e9ecee;border:1px solid #a9afb3;border-radius:1px;"><svg class="a" style="left:-.2px;top:-.2px" width="14.800" height="14.800" viewBox="0 0 14 14"><circle cx="6" cy="6" r="3.600" fill="#fff" stroke="#50565b" stroke-width="1"/><path d="M8.700,8.700 L12,12" stroke="#50565b" stroke-width="1.600" stroke-linecap="round"/><path d="M4.200,6 H7.800" stroke="#50565b" stroke-width="1"/></svg></div>
<div class="a" style="left:898.5px;top:67px;width:1px;height:9px;background:#b3b8bb"></div>
<div class="a" style="left:902px;top:64px;width:16px;height:16px;background:#e9ecee;border:1px solid #a9afb3;border-radius:1px;"><svg class="a" style="left:-.2px;top:-.2px" width="14.800" height="14.800" viewBox="0 0 14 14"><path d="M4,3.500 A4.500,4.500 0 1 0 7,2.500" fill="none" stroke="#50565b" stroke-width="1"/><path d="M2.500,2 L5.500,2.500 L3.500,5 Z" fill="#50565b"/><ellipse cx="7" cy="7" rx="2.600" ry="2" fill="#50565b"/></svg></div>
<div class="a" style="left:921px;top:64px;width:16px;height:16px;background:#e9ecee;border:1px solid #a9afb3;border-radius:1px;"><svg class="a" style="left:-.2px;top:-.2px" width="14.800" height="14.800" viewBox="0 0 14 14"><rect x="3.500" y="4.500" width="7" height="5" fill="#8d9296"/><path d="M2,3 L4,5 M12,3 L10,5 M2,11 L4,9 M12,11 L10,9" stroke="#8d9296" stroke-width="1"/></svg></div>
<div class="a" style="left:939px;top:64px;width:16px;height:16px;background:#e9ecee;border:1px solid #a9afb3;border-radius:1px;"><svg class="a" style="left:-.2px;top:-.2px" width="14.800" height="14.800" viewBox="0 0 14 14"><path d="M10,3.500 A4.500,4.500 0 1 1 7,2.500" fill="none" stroke="#50565b" stroke-width="1"/><path d="M11.500,2 L8.500,2.500 L10.500,5 Z" fill="#50565b"/><ellipse cx="7" cy="7" rx="2.600" ry="2" fill="#50565b"/></svg></div>
<div class="a" style="left:958.5px;top:67px;width:1px;height:9px;background:#b3b8bb"></div>
<div class="a" style="left:962px;top:64px;width:16px;height:16px;background:#e9ecee;border:1px solid #a9afb3;border-radius:1px;"><svg class="a" style="left:-.2px;top:-.2px" width="14.800" height="14.800" viewBox="0 0 14 14"><rect x="2.500" y="6" width="3.500" height="6" fill="#50565b"/><rect x="8" y="6" width="3.500" height="6" fill="#fff" stroke="#50565b" stroke-width=".8"/><path d="M4,4.500 C5,2 9,2 10,4.500" fill="none" stroke="#50565b" stroke-width=".9"/></svg></div>
<div class="a" style="left:818px;top:81.500px;width:206px;height:73px;background:#696c70"></div>
<div class="a" style="left:876px;top:83px;width:90.500px;height:69.500px;background:#fff"></div>
<svg class="a" style="left:876px;top:83px" width="90" height="70" viewBox="0 1.300 90 70">
<path d="M45.200,17.500 V13" stroke="#333" stroke-width="1"/>
<path d="M45.200,13.800 C42.500,13 41,10.500 41.500,7.500 C43,7.500 44.800,9 45.300,10.500 C46.300,8.800 48,7.500 49.500,7.200 C50,10.500 48,13.500 45.200,13.800 Z" fill="#1fb31f"/>
<path d="M41,43.500 C34,43.500 29,42 28.200,36 C27.500,25 34,17.800 45.200,17.800 C56.500,17.800 63,25 62.300,36 C61.500,42 56,43.500 48.500,43.500" fill="#fff" stroke="#111" stroke-width="1.100"/>
<path d="M41.200,43.500 L34,53.500 M48.300,43.500 L54.800,53.800" stroke="#222" stroke-width=".9"/>
<circle cx="32.800" cy="33" r="5" fill="#f8cf9a" opacity=".85"/><circle cx="57.600" cy="33" r="5" fill="#f8cf9a" opacity=".85"/>
<circle cx="37.800" cy="29.300" r="2.900" fill="#000"/><circle cx="52.500" cy="29" r="2.900" fill="#000"/>
<path d="M41.800,34.400 C43.500,35.800 47,35.800 48.500,34.600" stroke="#333" stroke-width=".6" fill="none"/>
<path d="M4,62.800 H18 M4,64.800 H9.500" stroke="#9a9a9a" stroke-width=".6"/>
</svg>
<div class="a" style="left:869px;top:81.500px;width:105px;height:72.500px;border:1.700px solid #d9342f;border-top-width:1.500px"></div>
<div class="a" style="left:818px;top:154.500px;width:206px;height:2px;background:#5f6367"></div>
<div class="ptitle" style="left:818px;top:156.5px;width:206px;height:12.5px;font-size:6.5px">Layer<div class="pbtn" style="left:189px;top:1px"><svg class="a" style="left:0;top:0" width="5" height="5" viewBox="0 0 5 5"><path d="M.5,1.500 H3.500 V4.500 H.5 Z M2.500,.5 H4.500 V2.500" fill="none" stroke="#b7bcbf" stroke-width=".7"/></svg></div><div class="pbtn" style="left:198px;top:1px"><svg class="a" style="left:0;top:0" width="5" height="5" viewBox="0 0 5 5"><path d="M.8,.8 L4.200,4.200 M4.200,.8 L.8,4.200" stroke="#9a9fa3" stroke-width="1.100"/></svg></div></div>
<span class="t" style="left:821.500px;top:174.500px;font-size:6.500px;color:#4a5056">Opacity</span>
<div class="a" style="left:873.500px;top:172.500px;width:119.500px;height:10.500px;background:linear-gradient(to right,#d4e9f8,#1e9bee);border:1px solid #8fb9d8"></div>
<span class="t" style="left:997px;top:173.500px;font-size:8px;color:#333;font-family:Liberation Serif,serif">100 %</span>
<span class="t" style="left:821.500px;top:190.500px;font-size:6.500px;color:#4a5056">Blending</span>
<div class="a" style="left:874.500px;top:187.500px;width:146px;height:12.500px;background:#fff;border:1px solid #c3c7ca"><span class="t" style="left:2px;top:3px;font-size:6.500px;color:#4a5056">Normal</span><svg class="a" style="left:137px;top:4px" width="5" height="4" viewBox="0 0 5 4"><path d="M.5,.8 L2.500,3 L4.500,.8" fill="none" stroke="#c5c9cc" stroke-width=".9"/></svg></div>
<div class="a" style="left:823.500px;top:207.500px;width:6.500px;height:6.500px;background:#d3d7da;border:1px solid #b5babd"></div><span class="t" style="left:834px;top:207.500px;font-size:6.500px;color:#aeb3b7">Protect Alpha</span>
<div class="a" style="left:891px;top:207px;width:7px;height:7px;background:#fff;border:1px solid #4a4f54"></div><span class="t" style="left:901.500px;top:207.500px;font-size:6.500px;color:#33383d">Clipping</span>
<div class="a" style="left:958px;top:207px;width:7px;height:7px;background:#fff;border:1px solid #4a4f54"></div><span class="t" style="left:969.500px;top:207.500px;font-size:6.500px;color:#33383d">Lock</span>
<div class="a" style="left:819px;top:218px;width:193.500px;height:188px;background:#808080"></div>
<div class="a" style="left:819px;top:218px;width:193.500px;height:106.500px;background:#fff;border:1px solid #1e1e1e"></div>
<div class="a" style="left:832.500px;top:218px;width:1px;height:106px;background:#2a2a2a"></div>
<div class="a" style="left:833.500px;top:219px;width:178.500px;height:26px;background:#72c2f1"></div>
<div class="a" style="left:823px;top:229.2px;width:6px;height:6px;border-radius:50%;background:#bcbcbc;border:1px solid #a8a8a8"></div>
<div class="a chk" style="left:841px;top:227.500px;width:24.500px;height:8px;border:1px solid #b9bdc0;background-size:3px 3px;background-position:0 0,1.500px 1.500px"><div class="a" style="left:2px;top:2px;width:18px;height:1px;background:#999"></div><div class="a" style="left:2px;top:4px;width:8px;height:1px;background:#aaa"></div></div>
<span class="t" style="left:876.500px;top:227.2px;font-size:9px;font-weight:bold;color:#111">@phamthikimha08</span>
<div class="a" style="left:819px;top:244.5px;width:193px;height:1px;background:#2a2a2a"></div>
<div class="a" style="left:823px;top:255.5px;width:6px;height:6px;border-radius:50%;background:#bcbcbc;border:1px solid #a8a8a8"></div>
<div class="a chk" style="left:841px;top:248.0px;width:24.500px;height:20px;border:1px solid #b9bdc0;background-size:3px 3px;background-position:0 0,1.500px 1.500px"></div>
<span class="t" style="left:876.500px;top:253.5px;font-size:8.400px;color:#1a1a1a">Layer3</span>
<div class="a" style="left:819px;top:270.8px;width:193px;height:1px;background:#2a2a2a"></div>
<div class="a" style="left:823px;top:281.8px;width:6px;height:6px;border-radius:50%;background:#bcbcbc;border:1px solid #a8a8a8"></div>
<div class="a chk" style="left:841px;top:274.3px;width:24.500px;height:20px;border:1px solid #b9bdc0;background-size:3px 3px;background-position:0 0,1.500px 1.500px"></div>
<span class="t" style="left:876.500px;top:279.8px;font-size:8.400px;color:#1a1a1a">Layer2</span>
<div class="a" style="left:819px;top:298px;width:193px;height:1px;background:#2a2a2a"></div>
<div class="a" style="left:823px;top:308.1px;width:6px;height:6px;border-radius:50%;background:#bcbcbc;border:1px solid #a8a8a8"></div>
<div class="a chk" style="left:841px;top:300.6px;width:24.500px;height:20px;border:1px solid #b9bdc0;background-size:3px 3px;background-position:0 0,1.500px 1.500px"></div>
<span class="t" style="left:876.500px;top:306.1px;font-size:8.400px;color:#1a1a1a">Layer1</span>
<svg class="a" style="left:841px;top:248px" width="25" height="20" viewBox="0 0 25 20"><path d="M10.500,13.500 L9,16 M13,13.500 L14.500,16" stroke="#888" stroke-width=".6"/><path d="M10,13.500 C11,12.800 12.500,12.800 13.500,13.500" stroke="#999" stroke-width=".5" fill="none"/></svg>
<svg class="a" style="left:841px;top:274.300px" width="25" height="20" viewBox="0 0 25 20"><circle cx="9.500" cy="9.500" r="1.300" fill="#f5b560"/><circle cx="15.500" cy="9.500" r="1.300" fill="#f5b560"/></svg>
<svg class="a" style="left:841px;top:300.600px" width="25" height="20" viewBox="0 0 25 20"><ellipse cx="12.300" cy="10" rx="4.300" ry="3.500" fill="#fff" stroke="#333" stroke-width=".7"/><circle cx="10.800" cy="9.800" r=".8" fill="#000"/><circle cx="13.800" cy="9.800" r=".8" fill="#000"/><path d="M12.300,6.500 V5" stroke="#333" stroke-width=".5"/><circle cx="12.300" cy="4.300" r=".9" fill="#1fb31f"/></svg>
<svg class="a" style="left:998.500px;top:226.500px" width="11" height="11" viewBox="0 0 11 11"><path d="M5.500,0 V11 M0,5.500 H11 M1.600,1.600 L9.400,9.400 M9.400,1.600 L1.600,9.400" stroke="#fff" stroke-width="1.700"/><circle cx="5.500" cy="5.500" r="3.500" fill="#fff"/><circle cx="5.500" cy="5.500" r="1.500" fill="#72c2f1"/></svg>
<div class="a" style="left:1013.500px;top:219px;width:10.500px;height:187px;background:#d9dcde"></div>
<div class="a" style="left:1013.500px;top:224.500px;width:10.500px;height:176.500px;background:#b9bec2;border-radius:3px;border:1px solid #a4a9ad"></div>
<div class="a" style="left:818px;top:406px;width:206px;height:20.500px;background:#c4c9cc"></div>
<div class="a" style="left:820px;top:408px;width:16px;height:16px;background:#e9ecee;border:1px solid #a9afb3;border-radius:1px;"><svg class="a" style="left:-.2px;top:-.2px" width="14.800" height="14.800" viewBox="0 0 14 14"><path d="M3.500,2.500 H8.500 L11,5 V12 H3.500 Z" fill="#fff" stroke="#50565b" stroke-width="1"/><path d="M8.500,2.500 V5 H11" fill="none" stroke="#50565b" stroke-width=".8"/></svg></div>
<div class="a" style="left:840px;top:408px;width:16px;height:16px;background:#e9ecee;border:1px solid #a9afb3;border-radius:1px;"><svg class="a" style="left:-.2px;top:-.2px" width="14.800" height="14.800" viewBox="0 0 14 14"><path d="M3.500,2.500 H8.500 L11,5 V12 H3.500 Z" fill="#fff" stroke="#50565b" stroke-width="1"/><text x="7.200" y="10.500" text-anchor="middle" font-size="6" font-family="Liberation Sans, sans-serif" fill="#50565b">8</text></svg></div>
<div class="a" style="left:858px;top:408px;width:16px;height:16px;background:#e9ecee;border:1px solid #a9afb3;border-radius:1px;"><svg class="a" style="left:-.2px;top:-.2px" width="14.800" height="14.800" viewBox="0 0 14 14"><path d="M3.500,2.500 H8.500 L11,5 V12 H3.500 Z" fill="#fff" stroke="#50565b" stroke-width="1"/><text x="7.200" y="10.500" text-anchor="middle" font-size="6" font-family="Liberation Sans, sans-serif" fill="#50565b">1</text></svg></div>
<div class="a" style="left:877px;top:408px;width:19px;height:16px;background:#dfe3e5;border:1px solid #cfd3d6"><div class="a" style="left:3px;top:4px;width:7px;height:6px;background:#eef0f1"></div><svg class="a" style="left:12.500px;top:6.500px" width="4" height="3" viewBox="0 0 4 3"><path d="M0,0 H4 L2,3 Z" fill="#50565b"/></svg></div>
<div class="a" style="left:899px;top:408px;width:16px;height:16px;background:#e9ecee;border:1px solid #a9afb3;border-radius:1px;"><svg class="a" style="left:-.2px;top:-.2px" width="14.800" height="14.800" viewBox="0 0 14 14"><path d="M2,3.500 H6 L7,5 H12 V11.500 H2 Z" fill="#50565b"/></svg></div>
<div class="a" style="left:917.5px;top:411.3px;width:1px;height:9px;background:#b3b8bb"></div>
<div class="a" style="left:921px;top:408px;width:16px;height:16px;background:#e9ecee;border:1px solid #a9afb3;border-radius:1px;"><svg class="a" style="left:-.2px;top:-.2px" width="14.800" height="14.800" viewBox="0 0 14 14"><rect x="5" y="3" width="6.500" height="6.500" fill="#fff" stroke="#50565b" stroke-width="1"/><rect x="2.500" y="5.500" width="6.500" height="6.500" fill="#fff" stroke="#50565b" stroke-width="1"/></svg></div>
<div class="a" style="left:940px;top:408px;width:16px;height:16px;background:#e9ecee;border:1px solid #a9afb3;border-radius:1px;"><svg class="a" style="left:-.2px;top:-.2px" width="14.800" height="14.800" viewBox="0 0 14 14"><rect x="2.500" y="3.500" width="4" height="8" fill="#fff" stroke="#a9aeb2" stroke-width="1"/><path d="M7.500,7.500 H9.500" stroke="#a9aeb2" stroke-width="1"/><rect x="10" y="6" width="2.500" height="3" fill="#8d9296"/></svg></div>
<div class="a" style="left:958.5px;top:411.3px;width:1px;height:9px;background:#b3b8bb"></div>
<div class="a" style="left:962px;top:408px;width:16px;height:16px;background:#e9ecee;border:1px solid #a9afb3;border-radius:1px;"><svg class="a" style="left:-.2px;top:-.2px" width="14.800" height="14.800" viewBox="0 0 14 14"><path d="M3,4 H11 M5.500,4 V2.800 H8.500 V4" fill="none" stroke="#50565b" stroke-width="1.100"/><path d="M3.500,5 H10.500 V12 H3.500 Z" fill="#50565b"/><path d="M5.800,6 V11 M8.200,6 V11" stroke="#e9ecee" stroke-width=".9"/></svg></div>
<div class="a" style="left:818px;top:426.500px;width:206px;height:3px;background:#5f6367"></div>
<div class="ptitle" style="left:818px;top:429.5px;width:206px;height:13px;font-size:6.5px">Reference<div class="pbtn" style="left:189px;top:1px"><svg class="a" style="left:0;top:0" width="5" height="5" viewBox="0 0 5 5"><path d="M.5,1.500 H3.500 V4.500 H.5 Z M2.500,.5 H4.500 V2.500" fill="none" stroke="#b7bcbf" stroke-width=".7"/></svg></div><div class="pbtn" style="left:198px;top:1px"><svg class="a" style="left:0;top:0" width="5" height="5" viewBox="0 0 5 5"><path d="M.8,.8 L4.200,4.200 M4.200,.8 L.8,4.200" stroke="#9a9fa3" stroke-width="1.100"/></svg></div></div>
<div class="a" style="left:818px;top:442.500px;width:206px;height:19px;background:#c4c9cc"></div>
<div class="a" style="left:820px;top:444px;width:16px;height:16px;background:#e9ecee;border:1px solid #a9afb3;border-radius:1px;"><svg class="a" style="left:-.2px;top:-.2px" width="14.800" height="14.800" viewBox="0 0 14 14"><path d="M7,2.500 C9,2.500 10,4 10,5 C11.500,5 12,6.500 11.500,7.500 C11,8.500 10,8.500 9,8.500 H5 C3,8.500 2.500,6.500 3.500,5.500 C3.500,3.500 5.500,2.500 7,2.500 Z" fill="#50565b"/><path d="M7,12.500 V7.500 M5,9.500 L7,7.300 L9,9.500" stroke="#e9ecee" stroke-width="2.200" fill="none"/><path d="M7,12.800 V8 M5.300,9.700 L7,7.800 L8.700,9.700" stroke="#50565b" stroke-width="1.200" fill="none"/></svg></div>
<div class="a" style="left:839px;top:444px;width:16px;height:16px;background:#e9ecee;border:1px solid #a9afb3;border-radius:1px;"><svg class="a" style="left:-.2px;top:-.2px" width="14.800" height="14.800" viewBox="0 0 14 14"><path d="M2,3.500 H6 L7,5 H11 V6 H4.500 L2.800,11 Z" fill="#50565b"/><path d="M4.800,6.500 H13 L11,11.500 H2.800 Z" fill="#50565b"/></svg></div>
<div class="a" style="left:857px;top:444px;width:16px;height:16px;background:#e9ecee;border:1px solid #a9afb3;border-radius:1px;"><svg class="a" style="left:-.2px;top:-.2px" width="14.800" height="14.800" viewBox="0 0 14 14"><path d="M4.500,4.500 L9.500,9.500 M9.500,4.500 L4.500,9.500" stroke="#8d9296" stroke-width="1.100"/></svg></div>
<div class="a" style="left:876.5px;top:447.5px;width:1px;height:9px;background:#b3b8bb"></div>
<div class="a" style="left:879px;top:444px;width:16px;height:16px;background:#e9ecee;border:1px solid #a9afb3;border-radius:1px;"><svg class="a" style="left:-.2px;top:-.2px" width="14.800" height="14.800" viewBox="0 0 14 14"><circle cx="6" cy="6" r="3.600" fill="#f3f4f5" stroke="#8d9296" stroke-width="1"/><path d="M8.700,8.700 L12,12" stroke="#8d9296" stroke-width="1.500" stroke-linecap="round"/><path d="M4.200,6 H7.800 M6,4.200 V7.800" stroke="#8d9296" stroke-width="1"/></svg></div>
<div class="a" style="left:898px;top:444px;width:16px;height:16px;background:#e9ecee;border:1px solid #a9afb3;border-radius:1px;"><svg class="a" style="left:-.2px;top:-.2px" width="14.800" height="14.800" viewBox="0 0 14 14"><rect x="2" y="3" width="10" height="8" fill="#f3f4f5" stroke="#8d9296" stroke-width="1"/><path d="M3,4 L5.500,4 L3,6.500 Z M11,4 L8.500,4 L11,6.500 Z M3,10 L5.500,10 L3,7.500 Z M11,10 L8.500,10 L11,7.500 Z" fill="#8d9296"/></svg></div>
<div class="a" style="left:917px;top:444px;width:16px;height:16px;background:#e9ecee;border:1px solid #a9afb3;border-radius:1px;"><svg class="a" style="left:-.2px;top:-.2px" width="14.800" height="14.800" viewBox="0 0 14 14"><circle cx="6" cy="6" r="3.600" fill="#f3f4f5" stroke="#8d9296" stroke-width="1"/><path d="M8.700,8.700 L12,12" stroke="#8d9296" stroke-width="1.500" stroke-linecap="round"/><path d="M4.200,6 H7.800" stroke="#8d9296" stroke-width="1"/></svg></div>
<div class="a" style="left:936px;top:447.5px;width:1px;height:9px;background:#b3b8bb"></div>
<div class="a" style="left:939px;top:444px;width:16px;height:16px;background:#e9ecee;border:1px solid #a9afb3;border-radius:1px;"><svg class="a" style="left:-.2px;top:-.2px" width="14.800" height="14.800" viewBox="0 0 14 14"><path d="M9,6 L4,11 L3,12 L2.500,11.500 L3.500,10.500 L8.500,5.500 Z" fill="#fff" stroke="#50565b" stroke-width="1"/><path d="M7.500,4 L10.500,7 M8.500,5 L10,3.500 C11,2.500 12.500,4 11.500,5 L10,6.500" stroke="#50565b" stroke-width="1.300" fill="#50565b"/></svg></div>
<div class="a" style="left:958px;top:444px;width:16.500px;height:16px;background:#e9ecee;border:1px solid #a9afb3;border-radius:1px;background:#1ea0ee;border-color:#1ea0ee;"><svg class="a" style="left:-.2px;top:-.2px" width="14.800" height="14.800" viewBox="0 0 14 14"><path d="M4.500,13 C3.500,11 2.200,9 1.800,7.800 C2.200,7.200 3,7.400 3.800,8.600 L4.200,9 V3.800 C4.200,3 5.400,3 5.400,3.800 V6.500 H5.800 V2.600 C5.800,1.800 7.100,1.800 7.100,2.600 V6.500 H7.500 V3 C7.500,2.200 8.800,2.200 8.800,3 V7 H9.200 V4.200 C9.200,3.400 10.400,3.400 10.400,4.200 V9.800 C10.400,11.400 9.800,12.200 9.400,13 Z" fill="#fff"/></svg></div>
<div class="a" style="left:977.5px;top:447.5px;width:1px;height:9px;background:#b3b8bb"></div>
<div class="a" style="left:980px;top:444px;width:16px;height:16px;background:#e9ecee;border:1px solid #a9afb3;border-radius:1px;"><svg class="a" style="left:-.2px;top:-.2px" width="14.800" height="14.800" viewBox="0 0 14 14"><path d="M4,3.500 A4.500,4.500 0 1 0 7,2.500" fill="none" stroke="#8d9296" stroke-width="1"/><path d="M2.500,2 L5.500,2.500 L3.500,5 Z" fill="#8d9296"/><ellipse cx="7" cy="7" rx="2.600" ry="2" fill="#8d9296"/></svg></div>
<div class="a" style="left:1017px;top:443.500px;width:7px;height:17.500px;background:#f1f2f3;border-radius:2px"></div>
<div class="a chk" style="left:818px;top:461.500px;width:206px;height:74.500px;background-color:#f9f9f9;background-image:linear-gradient(45deg,#eeeeee 25%,transparent 25%,transparent 75%,#eeeeee 75%),linear-gradient(45deg,#eeeeee 25%,transparent 25%,transparent 75%,#eeeeee 75%)"></div>
<!-- STATUS -->
<div id="status" class="a"><span class="t" style="left:4px;top:3px;font-size:7.700px;color:#3c4248">1500 * 1200 pixel&nbsp;&nbsp; (10.9 * 8.7cm)&nbsp;&nbsp; 350 dpi&nbsp;&nbsp; 71 %&nbsp;&nbsp; ( 457, 829 )</span></div>

<!-- TASKBAR -->
<div id="taskbar" class="a">
<div class="a" style="left:328.500px;top:0;width:32.500px;height:27px;background:#b5672a"></div>
<div class="a" style="left:394.500px;top:0;width:32.500px;height:27px;background:#555555"></div>
<svg class="a" style="left:6.0px;top:4.5px" width="20" height="20" viewBox="0 0 20 20"><path d="M4.500,5.800 L9.300,5.100 V9.600 H4.500 Z M10,5 L15.500,4.200 V9.600 H10 Z M4.500,10.300 H9.300 V14.800 L4.500,14.100 Z M10,10.300 H15.500 V15.700 L10,14.900 Z" fill="#fff"/></svg>
<svg class="a" style="left:38.0px;top:4.5px" width="20" height="20" viewBox="0 0 20 20"><circle cx="11.500" cy="8.500" r="3.600" fill="none" stroke="#fff" stroke-width="1.100"/><path d="M9,11 L5,15" stroke="#fff" stroke-width="1.200"/></svg>
<svg class="a" style="left:70.0px;top:4.5px" width="20" height="20" viewBox="0 0 20 20"><circle cx="10" cy="10" r="4.300" fill="none" stroke="#fff" stroke-width="1.500"/></svg>
<svg class="a" style="left:101.0px;top:4.5px" width="20" height="20" viewBox="0 0 20 20"><path d="M5.500,6.500 H12 V8.300 H5.500 Z M5.500,11.500 H12 V13.300 H5.500 Z" fill="#fff"/><path d="M14.500,5.500 V14.500" stroke="#fff" stroke-width="1.300"/><path d="M12.600,7 H13.200 V13 H12.600" fill="none" stroke="#fff" stroke-width=".6"/></svg>
<svg class="a" style="left:136.0px;top:4.5px" width="20" height="20" viewBox="0 0 20 20"><path d="M7,6 V4.500 C7,2.500 13,2.500 13,4.500 V6" fill="none" stroke="#fff" stroke-width="1"/><path d="M3.500,6 H16.500 V16.500 H3.500 Z" fill="#fff"/><path d="M7.500,9 H9.700 V11.200 H7.500 Z" fill="#f25022"/><path d="M10.300,9 H12.500 V11.200 H10.300 Z" fill="#7fba00"/><path d="M7.500,11.800 H9.700 V14 H7.500 Z" fill="#00a4ef"/><path d="M10.300,11.800 H12.500 V14 H10.300 Z" fill="#ffb900"/></svg>
<svg class="a" style="left:169.0px;top:4.5px" width="20" height="20" viewBox="0 0 20 20"><circle cx="10" cy="10" r="7.500" fill="#e33b2e"/><path d="M10,10 L3.500,6.250 A7.500,7.500 0 0 0 10,17.500 Z" fill="#2da94f"/><path d="M10,10 L10,17.500 A7.500,7.500 0 0 0 16.500,6.250 Z" fill="#fdc41b"/><path d="M3.500,6.250 A7.500,7.500 0 0 1 16.500,6.250 L10,6.250 Z" fill="#e33b2e"/><circle cx="10" cy="10" r="3.500" fill="#fff"/><circle cx="10" cy="10" r="2.700" fill="#4686f4"/></svg>
<svg class="a" style="left:202.0px;top:4.5px" width="20" height="20" viewBox="0 0 20 20"><path d="M2.500,4 H8 L9.500,5.500 H17.500 V16 H2.500 Z" fill="#f0b93a"/><path d="M2.500,7.500 H17.500 V16 H2.500 Z" fill="#f8d666"/><path d="M6.500,12 H13.500 V16 H6.500 Z" fill="#4a9de0"/><path d="M8,13.500 H12 V16 H8 Z" fill="#f8d666"/></svg>
<svg class="a" style="left:233.0px;top:3.5px" width="22" height="22" viewBox="0 0 22 22"><path d="M2,7 L10,3 L18,7 V16 H2 Z" fill="#1e74c8"/><path d="M2,7 L10,12 L18,7 V16 H2 Z" fill="#3fa3ea"/><path d="M3.500,6.500 H16.500 L10,11 Z" fill="#e8f1fa"/><circle cx="17" cy="15.500" r="3.600" fill="#222"/><text x="17" y="18" text-anchor="middle" font-size="6.500" font-family="Liberation Sans, sans-serif" fill="#fff">2</text></svg>
<svg class="a" style="left:268.0px;top:4.5px" width="20" height="20" viewBox="0 0 20 20"><defs><linearGradient id="eg" x1="0" y1="0" x2="1" y2="1"><stop offset="0" stop-color="#35c1f1"/><stop offset=".5" stop-color="#1b9de2"/><stop offset="1" stop-color="#0c59a4"/></linearGradient></defs><circle cx="10" cy="10" r="7.500" fill="url(#eg)"/><path d="M3,9 C4,4.500 9,2.500 13,4 C16,5.200 17.500,8 17.300,10.500 C17,12.500 14.500,13 12.500,12.500 C13.500,11 13,8.500 10.500,8 C7.500,7.500 5.500,10 6,13 C4,12 2.800,10.500 3,9 Z" fill="#4fd58a" opacity=".85"/><path d="M8,13 C8,15.500 11,17 14,15.500 C12,17.500 9.500,17.800 7.500,17 C6,16 6.500,13.500 8,13 Z" fill="#0c59a4"/></svg>
<svg class="a" style="left:302.0px;top:4.5px" width="20" height="20" viewBox="0 0 20 20"><path d="M9,2.500 L11,13" stroke="#e0e0e0" stroke-width="1.600"/><path d="M12.500,3 L8,13" stroke="#e8472b" stroke-width="2"/><circle cx="7" cy="14.800" r="1.900" fill="none" stroke="#3a8ee6" stroke-width="1.200"/><circle cx="12" cy="14.800" r="1.900" fill="none" stroke="#3a8ee6" stroke-width="1.200"/><path d="M4.500,6 C3.500,8 4,10 6.500,11" stroke="#e8472b" stroke-width="1.300" fill="none"/></svg>
<svg class="a" style="left:332.5px;top:3.5px" width="22" height="22" viewBox="0 0 22 22"><circle cx="13.500" cy="5.500" r="2.300" fill="#7b83eb"/><circle cx="17" cy="7" r="1.600" fill="#5059c9"/><path d="M10,8.500 H17.500 V13.500 C17.500,16.500 12,16.500 12,13.500 Z" fill="#7b83eb"/><rect x="3.500" y="6" width="8.500" height="8.500" rx="1" fill="#4b53bc"/><text x="7.700" y="12.600" text-anchor="middle" font-size="6.500" font-weight="bold" font-family="Liberation Sans, sans-serif" fill="#fff">T</text><circle cx="15.500" cy="15" r="4" fill="#d92c2c"/><text x="15.500" y="17.400" text-anchor="middle" font-size="6.500" font-weight="bold" font-family="Liberation Sans, sans-serif" fill="#fff">1</text></svg>
<svg class="a" style="left:367.0px;top:4.5px" width="20" height="20" viewBox="0 0 20 20"><rect x="8" y="4" width="9" height="12" fill="#fff" stroke="#1d6f42" stroke-width="1"/><path d="M12.500,4 V16 M8,8 H17 M8,12 H17" stroke="#1d6f42" stroke-width=".8"/><rect x="2.500" y="4.500" width="9" height="11" fill="#1d6f42"/><text x="7" y="13" text-anchor="middle" font-size="8" font-weight="bold" font-family="Liberation Sans, sans-serif" fill="#fff">X</text></svg>
<svg class="a" style="left:400.0px;top:4.5px" width="20" height="20" viewBox="0 0 20 20"><rect x="2.500" y="3" width="15" height="14" fill="#fff"/><rect x="2.500" y="3" width="15" height="7" fill="#d9262c"/><text x="10" y="8.800" text-anchor="middle" font-size="5" font-weight="bold" font-family="Liberation Sans, sans-serif" fill="#fff">JUMP</text><rect x="3.500" y="10.500" width="13" height="5.500" fill="#222"/><text x="10" y="15.300" text-anchor="middle" font-size="5" font-weight="bold" font-family="Liberation Sans, sans-serif" fill="#fff">ART</text></svg>
<svg class="a" style="left:433.5px;top:4.5px" width="20" height="20" viewBox="0 0 20 20"><rect x="2.500" y="3" width="15" height="14" rx="4" fill="#4a8cf6"/><rect x="5.500" y="7.500" width="6.500" height="5" rx="1" fill="#fff"/><path d="M12.500,9.500 L15,7.800 V12.200 L12.500,10.500 Z" fill="#fff"/></svg>
<svg class="a" style="left:465.0px;top:3.5px" width="22" height="22" viewBox="0 0 22 22"><circle cx="10" cy="10" r="7.500" fill="#5865f2"/><path d="M6,7.500 C8.500,6.300 11.500,6.300 14,7.500 C15,9.500 15.300,11.500 15,13 C12,14.800 8,14.800 5,13 C4.700,11.500 5,9.500 6,7.500 Z" fill="#fff"/><circle cx="8.200" cy="10.800" r="1.100" fill="#5865f2"/><circle cx="11.800" cy="10.800" r="1.100" fill="#5865f2"/><circle cx="15.500" cy="14.500" r="3.300" fill="#e8443a"/><circle cx="15.500" cy="14.500" r="1.300" fill="#fff"/></svg>
<svg class="a" style="left:497.0px;top:4.5px" width="20" height="20" viewBox="0 0 20 20"><circle cx="10" cy="10" r="7.500" fill="#14a6e8"/><text x="10" y="14" text-anchor="middle" font-size="11" font-weight="bold" font-family="Liberation Sans, sans-serif" fill="#fff">S</text></svg>
<div class="a" style="left:166px;top:25.500px;width:26.5px;height:1.500px;background:#7dbdee"></div><div class="a" style="left:198.7px;top:25.500px;width:26.30000000000001px;height:1.500px;background:#7dbdee"></div><div class="a" style="left:264.7px;top:25.500px;width:26.30000000000001px;height:1.500px;background:#7dbdee"></div><div class="a" style="left:298.5px;top:25.500px;width:26.19999999999999px;height:1.500px;background:#7dbdee"></div><div class="a" style="left:364.7px;top:25.500px;width:26.30000000000001px;height:1.500px;background:#7dbdee"></div><div class="a" style="left:397px;top:25.500px;width:26.5px;height:1.500px;background:#7dbdee"></div><div class="a" style="left:430px;top:25.500px;width:27px;height:1.500px;background:#7dbdee"></div><div class="a" style="left:463.5px;top:25.500px;width:26.19999999999999px;height:1.500px;background:#7dbdee"></div><div class="a" style="left:497px;top:25.500px;width:26px;height:1.500px;background:#7dbdee"></div><div class="a" style="left:328.500px;top:25.500px;width:32.500px;height:1.500px;background:#f08a2c"></div>
<svg class="a" style="left:763px;top:8.500px" width="17" height="12" viewBox="0 0 17 12"><path d="M4,10.500 C1.500,10.500 .5,8.500 1.500,7 C2,6 3,5.800 3.800,6 C4,3 7,1 9.500,2.500 C10.500,3 11.200,4 11.400,5 C13.500,4.500 15.500,6 15.500,8 C15.500,9.500 14.500,10.500 13,10.500 Z" fill="#e6eef7"/><path d="M5,10.500 C4,9 5,7 7,7.300 C7.500,5.500 10.500,5.500 11,7.500 C13,7.500 13.500,10 12,10.500 Z" fill="#9fc3ea"/></svg>
<span class="t" style="left:784.500px;top:9.500px;font-size:9.500px;color:#fff">85°F&nbsp;&nbsp;Light rain</span>
<svg class="a" style="left:859px;top:10.500px" width="9" height="7" viewBox="0 0 9 7"><path d="M1,5.500 L4.500,1.800 L8,5.500" fill="none" stroke="#fff" stroke-width="1"/></svg>
<svg class="a" style="left:875.500px;top:9px" width="10" height="10" viewBox="0 0 10 10"><path d="M1,9 A8,8 0 0 1 9,1 M3,9 A6,6 0 0 1 9,3 M5.200,9 A3.800,3.800 0 0 1 9,5.200" fill="none" stroke="#cfcfcf" stroke-width=".9"/><circle cx="8.300" cy="8.300" r="1" fill="#fff"/></svg>
<svg class="a" style="left:890px;top:9px" width="12" height="10" viewBox="0 0 12 10"><path d="M1,3.500 H3 L5.500,1.200 V8.800 L3,6.500 H1 Z" fill="none" stroke="#fff" stroke-width=".8"/><path d="M7,3.200 C8,4.200 8,5.800 7,6.800 M8.600,2 C10.200,3.700 10.200,6.300 8.600,8" fill="none" stroke="#bdbdbd" stroke-width=".8"/></svg>
<svg class="a" style="left:905.500px;top:10.500px" width="13" height="7" viewBox="0 0 13 7"><rect x=".5" y=".8" width="10.500" height="5.400" fill="none" stroke="#fff" stroke-width=".9"/><rect x="1.500" y="1.800" width="6" height="3.400" fill="#fff"/><rect x="11.300" y="2.400" width="1.200" height="2.200" fill="#fff"/></svg>
<span class="t" style="left:925px;top:11px;font-size:7px;color:#fff">ENG</span>
<span class="t" style="left:952px;top:4px;font-size:7.500px;color:#fff">8:40 AM</span>
<span class="t" style="left:949px;top:16px;font-size:7.700px;color:#fff">10/2/2021</span>
<svg class="a" style="left:996.500px;top:8px" width="12" height="12" viewBox="0 0 12 12"><path d="M1,.8 H11 V8.800 H7 L6,10.500 L5,8.800 H1 Z" fill="none" stroke="#fff" stroke-width=".9"/></svg>
</div>

</body></html>
